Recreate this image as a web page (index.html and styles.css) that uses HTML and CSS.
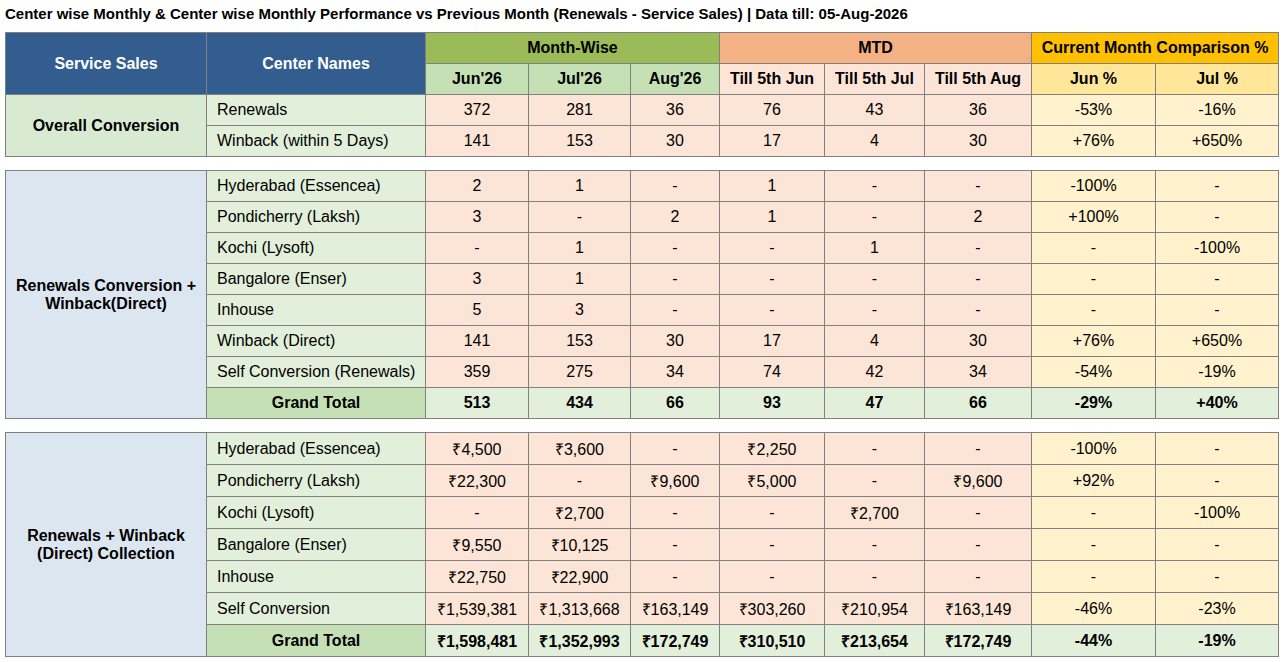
FILE: index.html
```html
<!DOCTYPE html>
<html>
<head>
<meta charset="utf-8">
<link rel="stylesheet" href="styles.css">
</head>
<body>
<div class="page">
<h1 class="title">Center wise Monthly &amp; Center wise Monthly Performance vs Previous Month (Renewals - Service Sales) | Data till: 05-Aug-2026</h1>

<table class="grid t1">
<colgroup><col class="c1"><col class="c2"><col class="c3"><col class="c4"><col class="c5"><col class="c6"><col class="c7"><col class="c8"><col class="c9"><col class="c10"></colgroup>
<tr>
<th rowspan="2" class="hblue">Service Sales</th>
<th rowspan="2" class="hblue">Center Names</th>
<th colspan="3" class="hgreen">Month-Wise</th>
<th colspan="3" class="horange">MTD</th>
<th colspan="2" class="hgold">Current Month Comparison %</th>
</tr>
<tr>
<th class="sgreen">Jun'26</th><th class="sgreen">Jul'26</th><th class="sgreen">Aug'26</th>
<th class="speach">Till 5th Jun</th><th class="speach">Till 5th Jul</th><th class="speach">Till 5th Aug</th>
<th class="syellow">Jun %</th><th class="syellow">Jul %</th>
</tr>
<tr>
<td rowspan="2" class="group ggreen">Overall Conversion</td>
<td class="name">Renewals</td><td class="p">372</td><td class="p">281</td><td class="p">36</td><td class="p">76</td><td class="p">43</td><td class="p">36</td><td class="y">-53%</td><td class="y">-16%</td>
</tr>
<tr>
<td class="name">Winback (within 5 Days)</td><td class="p">141</td><td class="p">153</td><td class="p">30</td><td class="p">17</td><td class="p">4</td><td class="p">30</td><td class="y">+76%</td><td class="y">+650%</td>
</tr>
</table>

<table class="grid t2">
<colgroup><col class="c1"><col class="c2"><col class="c3"><col class="c4"><col class="c5"><col class="c6"><col class="c7"><col class="c8"><col class="c9"><col class="c10"></colgroup>
<tr>
<td rowspan="8" class="group gblue">Renewals Conversion +<br>Winback(Direct)</td>
<td class="name">Hyderabad (Essencea)</td><td class="p">2</td><td class="p">1</td><td class="p">-</td><td class="p">1</td><td class="p">-</td><td class="p">-</td><td class="y">-100%</td><td class="y">-</td>
</tr>
<tr><td class="name">Pondicherry (Laksh)</td><td class="p">3</td><td class="p">-</td><td class="p">2</td><td class="p">1</td><td class="p">-</td><td class="p">2</td><td class="y">+100%</td><td class="y">-</td></tr>
<tr><td class="name">Kochi (Lysoft)</td><td class="p">-</td><td class="p">1</td><td class="p">-</td><td class="p">-</td><td class="p">1</td><td class="p">-</td><td class="y">-</td><td class="y">-100%</td></tr>
<tr><td class="name">Bangalore (Enser)</td><td class="p">3</td><td class="p">1</td><td class="p">-</td><td class="p">-</td><td class="p">-</td><td class="p">-</td><td class="y">-</td><td class="y">-</td></tr>
<tr><td class="name">Inhouse</td><td class="p">5</td><td class="p">3</td><td class="p">-</td><td class="p">-</td><td class="p">-</td><td class="p">-</td><td class="y">-</td><td class="y">-</td></tr>
<tr><td class="name">Winback (Direct)</td><td class="p">141</td><td class="p">153</td><td class="p">30</td><td class="p">17</td><td class="p">4</td><td class="p">30</td><td class="y">+76%</td><td class="y">+650%</td></tr>
<tr><td class="name">Self Conversion (Renewals)</td><td class="p">359</td><td class="p">275</td><td class="p">34</td><td class="p">74</td><td class="p">42</td><td class="p">34</td><td class="y">-54%</td><td class="y">-19%</td></tr>
<tr class="total"><td class="tlabel">Grand Total</td><td>513</td><td>434</td><td>66</td><td>93</td><td>47</td><td>66</td><td>-29%</td><td>+40%</td></tr>
</table>

<table class="grid t3">
<colgroup><col class="c1"><col class="c2"><col class="c3"><col class="c4"><col class="c5"><col class="c6"><col class="c7"><col class="c8"><col class="c9"><col class="c10"></colgroup>
<tr>
<td rowspan="7" class="group gblue">Renewals + Winback<br>(Direct) Collection</td>
<td class="name">Hyderabad (Essencea)</td><td class="p">₹4,500</td><td class="p">₹3,600</td><td class="p">-</td><td class="p">₹2,250</td><td class="p">-</td><td class="p">-</td><td class="y">-100%</td><td class="y">-</td>
</tr>
<tr><td class="name">Pondicherry (Laksh)</td><td class="p">₹22,300</td><td class="p">-</td><td class="p">₹9,600</td><td class="p">₹5,000</td><td class="p">-</td><td class="p">₹9,600</td><td class="y">+92%</td><td class="y">-</td></tr>
<tr><td class="name">Kochi (Lysoft)</td><td class="p">-</td><td class="p">₹2,700</td><td class="p">-</td><td class="p">-</td><td class="p">₹2,700</td><td class="p">-</td><td class="y">-</td><td class="y">-100%</td></tr>
<tr><td class="name">Bangalore (Enser)</td><td class="p">₹9,550</td><td class="p">₹10,125</td><td class="p">-</td><td class="p">-</td><td class="p">-</td><td class="p">-</td><td class="y">-</td><td class="y">-</td></tr>
<tr><td class="name">Inhouse</td><td class="p">₹22,750</td><td class="p">₹22,900</td><td class="p">-</td><td class="p">-</td><td class="p">-</td><td class="p">-</td><td class="y">-</td><td class="y">-</td></tr>
<tr><td class="name">Self Conversion</td><td class="p">₹1,539,381</td><td class="p">₹1,313,668</td><td class="p">₹163,149</td><td class="p">₹303,260</td><td class="p">₹210,954</td><td class="p">₹163,149</td><td class="y">-46%</td><td class="y">-23%</td></tr>
<tr class="total"><td class="tlabel">Grand Total</td><td>₹1,598,481</td><td>₹1,352,993</td><td>₹172,749</td><td>₹310,510</td><td>₹213,654</td><td>₹172,749</td><td>-44%</td><td>-19%</td></tr>
</table>
</div>
</body>
</html>
```

FILE: styles.css
```css
html, body {
  margin: 0;
  padding: 0;
  background: #ffffff;
}

.page {
  padding: 5px 5px 0 5px;
  font-family: "Liberation Sans", Arial, sans-serif;
  color: #000000;
}

.title {
  font-size: 15px;
  font-weight: bold;
  margin: 0;
  height: 27px;
  line-height: 17px;
}

.grid {
  border-collapse: collapse;
  table-layout: fixed;
  width: 1274px;
  font-size: 16px;
  margin-bottom: 13px;
}

.c1 { width: 201px; }
.c2 { width: 219px; }
.c3 { width: 103px; }
.c4 { width: 102px; }
.c5 { width: 89px; }
.c6 { width: 105px; }
.c7 { width: 100px; }
.c8 { width: 107px; }
.c9 { width: 124px; }
.c10 { width: 123px; }

.grid th,
.grid td {
  border: 1px solid #808080;
  padding: 0 4px;
  text-align: center;
  white-space: nowrap;
}

.t1 tr, .t2 tr { height: 31px; }
.t3 tr { height: 32px; }

.grid th { font-weight: bold; }

.hblue { background: #335d8f; color: #ffffff; }
.hgreen { background: #9bbb59; }
.horange { background: #f4b183; }
.hgold { background: #ffc000; }
.sgreen { background: #c5e0b4; }
.speach { background: #fce4d6; }
.syellow { background: #ffe699; }

.group { font-weight: bold; line-height: 18px; }
.ggreen { background: #d9ead3; }
.gblue { background: #dce6f1; }

.grid .name {
  background: #e2efda;
  text-align: left;
  padding-left: 10px;
}

.p { background: #fce4d6; }
.y { background: #fff2cc; }

.total td {
  background: #e2efda;
  font-weight: bold;
}

.total .tlabel { background: #c5e0b4; }
```
